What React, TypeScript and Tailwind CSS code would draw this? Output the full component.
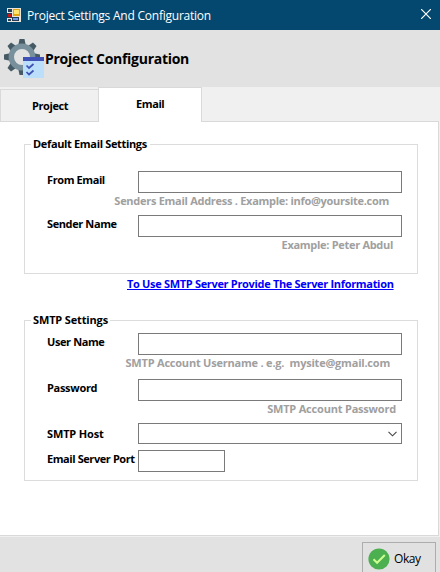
import React from "react";

function FormIcon() {
  return (
    <svg width="14" height="14" viewBox="0 0 14 14" shapeRendering="crispEdges">
      <path fill="#e9e4da" d="M0 0h14v14H0z" />
      <path fill="#2b3c55" d="M1 1h4v3H1zM0 5h5v5H0zM1 11h3v2H1zM5 9h7v4H5z" />
      <path fill="#c01818" d="M1 6h3v3H1z" />
      <path fill="#e2a512" d="M6 1h7v7H6z" />
      <path fill="#ffe36b" d="M7 2h5v4H7z" />
      <path fill="#6c9cf0" d="M6 10h5v2H6z" />
    </svg>
  );
}

const teeth = [0, 45, 90, 135, 180, 225, 270, 315];

function GearIcon() {
  return (
    <svg width="41" height="40" viewBox="0 0 41 40" className="shrink-0">
      {teeth.map((a) => (
        <path key={a} fill="#455a64" d="M15.500 1h5l1.200 6h-7.400z" transform={`rotate(${a} 18 19)`} />
      ))}
      <circle cx="18" cy="19" r="10.700" fill="none" stroke="#78909c" strokeWidth="5.400" />
      <path fill="#bbdefb" d="M19 19h21v21H19z" />
      <path fill="#3f51b5" d="M19 19h21v4H19z" />
      <path fill="none" stroke="#3f51b5" strokeWidth="1.700" d="M22.500 27.500l2.500 2.500 4.500-4M22.500 34l2.500 2.500 4.500-4" />
    </svg>
  );
}

function Group({ title, titleClass, className, children }: { title: string; titleClass: string; className: string; children: React.ReactNode }) {
  return (
    <section className={`ml-6 w-[394px] border border-[#dcdcdc] ${className}`}>
      <div className="-mt-[9px] ml-[6px] flex h-[17px] items-start">
        <h2 className={`bg-white pl-[2px] leading-4 whitespace-pre ${titleClass}`}>{title}</h2>
      </div>
      {children}
    </section>
  );
}

function Row({ label, labelClass, className, children }: { label: string; labelClass: string; className: string; children: React.ReactNode }) {
  return (
    <div className={`flex pl-[22px] ${className}`}>
      <label className="h-[18px] w-[91px] shrink-0 leading-[18px] whitespace-pre">
        <span className={labelClass}>{label}</span>
      </label>
      {children}
    </div>
  );
}

function Hint({ text, className }: { text: string; className: string }) {
  return (
    <p className={`flex h-4 justify-end leading-4 whitespace-pre text-[#a0a0a0] ${className}`}>
      <span>{text}</span>
    </p>
  );
}

function Field({ className = "h-[22px] w-[264px]" }: { className?: string }) {
  return <input className={`block border border-[#7a7a7a] bg-white px-1 outline-none ${className}`} />;
}

export default function App() {
  return (
    <div className="flex h-[572px] w-[440px] flex-col overflow-hidden bg-[#f0f0f0] font-['Open_Sans','Noto_Sans',sans-serif] text-[11px] font-bold text-black">
      <header className="flex h-[30px] shrink-0 items-center bg-[#05486f] pr-[9px] pl-[7px] font-normal text-white">
        <FormIcon />
        <span className="mt-px ml-[6px] text-[12px] leading-4 tracking-[-0.23px] whitespace-pre">Project Settings And Configuration</span>
        <svg width="10" height="10" viewBox="0 0 10 10" className="-mt-[2px] ml-auto">
          <path d="M0 0l10 10M10 0L0 10" stroke="#fff" strokeWidth="1.200" />
        </svg>
      </header>

      <div className="flex h-[57px] shrink-0 items-start bg-[#e2e2e2] pt-[8px] pl-1">
        <GearIcon />
        <h1 className="mt-[11px] text-[14px] leading-5 tracking-[-0.28px] whitespace-pre">Project Configuration</h1>
      </div>

      <nav className="flex h-[34px] shrink-0 items-end">
        <div className="h-8 w-[98px] border-t border-l border-[#d9d9d9] pt-[8px] pl-[31px] leading-4">
          <span className="tracking-[-0.4px]">Project</span>
        </div>
        <div className="relative z-10 -mb-px h-[35px] w-[104px] border border-b-0 border-[#d9d9d9] bg-white pt-[8px] pl-[37px] leading-4">
          <span className="tracking-[-0.4px]">Email</span>
        </div>
      </nav>

      <main className="h-[415px] w-[439px] shrink-0 border-t border-r border-b border-[#d9d9d9] bg-white pt-[22px]">
        <Group title="Default Email Settings" titleClass="w-[119px] tracking-[-0.34px]" className="h-[130px]">
          <Row label="From Email" labelClass="tracking-[-0.4px]" className="mt-[18px]">
            <Field />
          </Row>
          <Hint text="Senders Email Address . Example: info@yoursite.com" className="pr-[28px] tracking-[-0.28px]" />
          <Row label="Sender Name" labelClass="tracking-[-0.39px]" className="mt-[6px]">
            <Field />
          </Row>
          <Hint text="Example: Peter Abdul" className="pr-[24px] tracking-[-0.3px]" />
        </Group>

        <div className="mt-px flex h-[18px] pl-[127px] leading-[18px] text-[#0000ff]">
          <a className="tracking-[-0.32px] whitespace-pre underline">To Use SMTP Server Provide The Server Information</a>
        </div>

        <Group title="SMTP Settings" titleClass="w-[79px] tracking-[-0.15px]" className="mt-[27px] h-[161px]">
          <Row label="User Name" labelClass="tracking-[-0.4px]" className="mt-[4px]">
            <Field />
          </Row>
          <Hint text="SMTP Account Username . e.g.  mysite@gmail.com" className="pr-[27px] tracking-[-0.21px]" />
          <Row label="Password" labelClass="tracking-[-0.3px]" className="mt-[8px]">
            <Field />
          </Row>
          <Hint text="SMTP Account Password" className="pr-[21px] tracking-[-0.2px]" />
          <Row label="SMTP Host" labelClass="tracking-[-0.15px]" className="mt-[6px] items-center">
            <div className="flex h-[21px] w-[264px] items-center justify-end border border-[#7a7a7a] pr-1">
              <svg width="9" height="6" viewBox="0 0 9 6" fill="none">
                <path d="M.5.800l4 4 4-4" stroke="#444" strokeWidth="1.100" />
              </svg>
            </div>
          </Row>
          <Row label="Email Server Port" labelClass="tracking-[-0.42px]" className="mt-[6px]">
            <Field className="h-[22px] w-[87px]" />
          </Row>
        </Group>
      </main>

      <footer className="mt-px flex h-[35px] shrink-0 justify-end bg-[#e2e2e2] pt-[5px] pr-[4px]">
        <button className="flex h-[34px] w-[74px] items-start border border-[#adadad] bg-[#e1e1e1] pt-[5px] pl-[5px] font-normal">
          <svg width="22" height="22" viewBox="0 0 22 22">
            <circle cx="11" cy="11" r="10.600" fill="#4caf50" />
            <path d="M5.500 11.200l3.600 3.600 7.700-7.800" fill="none" stroke="#ccff90" strokeWidth="2" />
          </svg>
          <span className="mt-[3px] ml-[4px] text-[12px] leading-4 tracking-[-0.4px]">Okay</span>
        </button>
      </footer>
    </div>
  );
}
